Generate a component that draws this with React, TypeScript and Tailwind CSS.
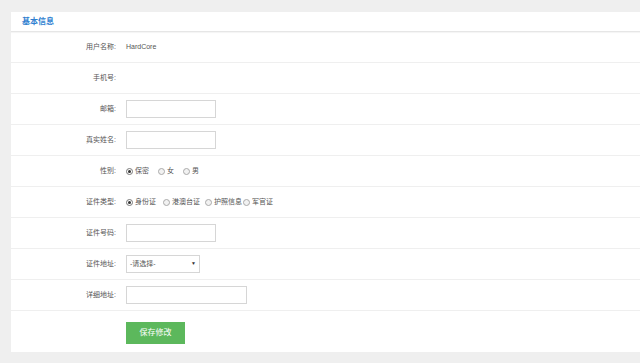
import type { ReactNode } from 'react';

const Radio = ({ checked = false, label }: { checked?: boolean; label: string }) => (
  <span className="flex items-center">
    <span
      className={
        checked
          ? 'w-[7px] h-[7px] rounded-full border border-[#777] bg-white flex items-center justify-center'
          : 'w-[7px] h-[7px] rounded-full border border-[#aaa] bg-[#f2f2f2]'
      }
    >
      {checked && <span className="w-[3px] h-[3px] rounded-full bg-[#333]" />}
    </span>
    <span className="ml-[2px]">{label}</span>
  </span>
);

const Row = ({ label, children }: { label: string; children?: ReactNode }) => (
  <div className="h-[31px] flex items-center border-b border-[#efefef]">
    <div className="w-[105px] text-right text-[7px] text-[#555]">{label}</div>
    <div className="ml-[10px] flex items-center text-[7px] text-[#555]">{children}</div>
  </div>
);

const TextBox = ({ width }: { width: string }) => (
  <div className={`${width} h-[18px] border border-[#d6d6d6] bg-white`} />
);

export default function App() {
  return (
    <div
      className="w-[640px] h-[363px] bg-[#efefef] pt-[12px] pl-[11px] overflow-hidden"
      style={{ fontFamily: '"Liberation Sans", "Noto Sans CJK SC", sans-serif' }}
    >
      <div className="bg-white h-[340px]">
        {/* 标题 */}
        <div className="h-[20px] flex items-center pl-[11px] border-b border-[#e6e6e6] shadow-[0_1px_1px_rgba(0,0,0,0.04)]">
          <span className="text-[8px] font-bold text-[#2f7fd0]">基本信息</span>
        </div>
        <Row label="用户名称:">
          <span className="text-[#555]">HardCore</span>
        </Row>
        <Row label="手机号:" />
        <Row label="邮箱:">
          <TextBox width="w-[90px]" />
        </Row>
        <Row label="真实姓名:">
          <TextBox width="w-[90px]" />
        </Row>
        <Row label="性别:">
          <div className="flex items-center gap-[9px]">
            <Radio checked label="保密" />
            <Radio label="女" />
            <Radio label="男" />
          </div>
        </Row>
        <Row label="证件类型:">
          <div className="flex items-center">
            <Radio checked label="身份证" />
            <span className="ml-[7px]"><Radio label="港澳台证" /></span>
            <span className="ml-[5px]"><Radio label="护照信息" /></span>
            <span className="ml-[1px]"><Radio label="军官证" /></span>
          </div>
        </Row>
        <Row label="证件号码:">
          <TextBox width="w-[90px]" />
        </Row>
        <Row label="证件地址:">
          <div className="w-[74px] h-[18px] border border-[#d6d6d6] bg-white flex items-center justify-between px-[3px]">
            <span>-请选择-</span>
            <span className="text-[5px] text-[#333]">▼</span>
          </div>
        </Row>
        <Row label="详细地址:">
          <TextBox width="w-[121px]" />
        </Row>
        {/* 保存 */}
        <div className="pt-[11px] pl-[115px]">
          <button className="w-[59px] h-[22px] bg-[#5cb85c] text-white text-[8px] flex items-center justify-center">
            保存修改
          </button>
        </div>
      </div>
    </div>
  );
}
